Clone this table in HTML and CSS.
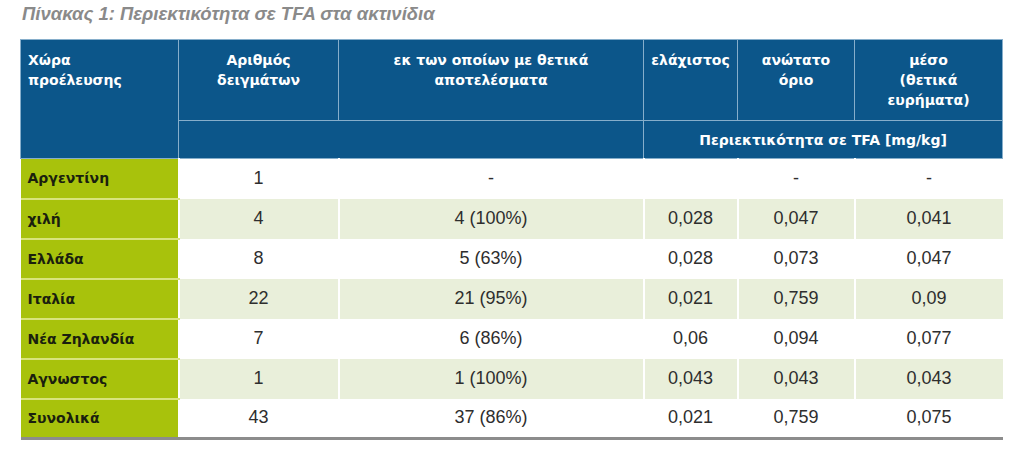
FILE: index.html
```html
<!DOCTYPE html>
<html lang="el">
<head>
<meta charset="utf-8">
<title>Πίνακας 1</title>
<link rel="stylesheet" href="styles.css">
</head>
<body>
<div class="page">
  <h1 class="title">Πίνακας 1: Περιεκτικότητα σε TFA στα ακτινίδια</h1>
  <table class="data">
    <colgroup>
      <col class="c1"><col class="c2"><col class="c3"><col class="c4"><col class="c5"><col class="c6">
    </colgroup>
    <thead>
      <tr class="h1">
        <th class="left" rowspan="2">Χώρα<br>προέλευσης</th>
        <th>Αριθμός<br>δειγμάτων</th>
        <th>εκ των οποίων με θετικά<br>αποτελέσματα</th>
        <th>ελάχιστος</th>
        <th>ανώτατο<br>όριο</th>
        <th>μέσο<br>(θετικά<br>ευρήματα)</th>
      </tr>
      <tr class="h2">
        <th colspan="2"></th>
        <th colspan="3" class="unit">Περιεκτικότητα σε TFA [mg/kg]</th>
      </tr>
    </thead>
    <tbody>
      <tr><th>Αργεντίνη</th><td>1</td><td>-</td><td></td><td>-</td><td>-</td></tr>
      <tr class="alt"><th>χιλή</th><td>4</td><td>4 (100%)</td><td>0,028</td><td>0,047</td><td>0,041</td></tr>
      <tr><th>Ελλάδα</th><td>8</td><td>5 (63%)</td><td>0,028</td><td>0,073</td><td>0,047</td></tr>
      <tr class="alt"><th>Ιταλία</th><td>22</td><td>21 (95%)</td><td>0,021</td><td>0,759</td><td>0,09</td></tr>
      <tr><th>Νέα Ζηλανδία</th><td>7</td><td>6 (86%)</td><td>0,06</td><td>0,094</td><td>0,077</td></tr>
      <tr class="alt"><th>Αγνωστος</th><td>1</td><td>1 (100%)</td><td>0,043</td><td>0,043</td><td>0,043</td></tr>
      <tr class="last"><th>Συνολικά</th><td>43</td><td>37 (86%)</td><td>0,021</td><td>0,759</td><td>0,075</td></tr>
    </tbody>
  </table>
</div>
</body>
</html>
```
FILE: styles.css
```css
* { box-sizing: border-box; }
html, body { margin: 0; background: #ffffff; }
body { font-family: "Liberation Sans", Arial, sans-serif; }

.page {
  display: flex;
  flex-direction: column;
  align-items: flex-start;
  gap: 14px;
  padding: 3px 22px 0 20px;
}

.title {
  margin: 0;
  padding: 0 0 0 2px;
  font-style: italic;
  font-weight: bold;
  font-size: 18.5px;
  line-height: 22px;
  font-family: "Liberation Sans", Arial, sans-serif;
  color: #8a8a8a;
}

.data {
  width: 982px;
  border-collapse: collapse;
  table-layout: fixed;
}
.c1 { width: 158px; }
.c2 { width: 160px; }
.c3 { width: 305px; }
.c4 { width: 94px; }
.c5 { width: 117px; }
.c6 { width: 148px; }

.data thead th {
  background: #0c568a;
  color: #ffffff;
  font-family: "DejaVu Sans", Verdana, sans-serif;
  font-weight: bold;
  font-size: 14px;
  line-height: 20px;
  text-align: center;
  vertical-align: top;
  padding: 10px 5px 0;
  border: 1px solid #86aecb;
}
.data thead th.left { text-align: left; padding-left: 7px; }
.data .h1 th { height: 81px; }
.data .h2 th { height: 38px; vertical-align: middle; padding-top: 0; }

.data tbody th {
  background: #a8c20c;
  color: #1a1f0e;
  font-family: "DejaVu Sans", Verdana, sans-serif;
  font-weight: bold;
  font-size: 14px;
  line-height: 20px;
  text-align: left;
  padding: 0 7px;
  height: 40px;
  border-bottom: 2px solid #d8e47c;
  border-right: 1px solid #e6eea8;
}
.data tbody td {
  height: 40px;
  padding: 0;
  text-align: center;
  vertical-align: middle;
  font-size: 18px;
  color: #2e2e2e;
  border-left: 2px solid #ffffff;
}
.data tbody tr.alt td { background: #e9efda; }
.data tbody tr.last th,
.data tbody tr.last td { border-bottom: 3px solid #8c8c8c; }
```
